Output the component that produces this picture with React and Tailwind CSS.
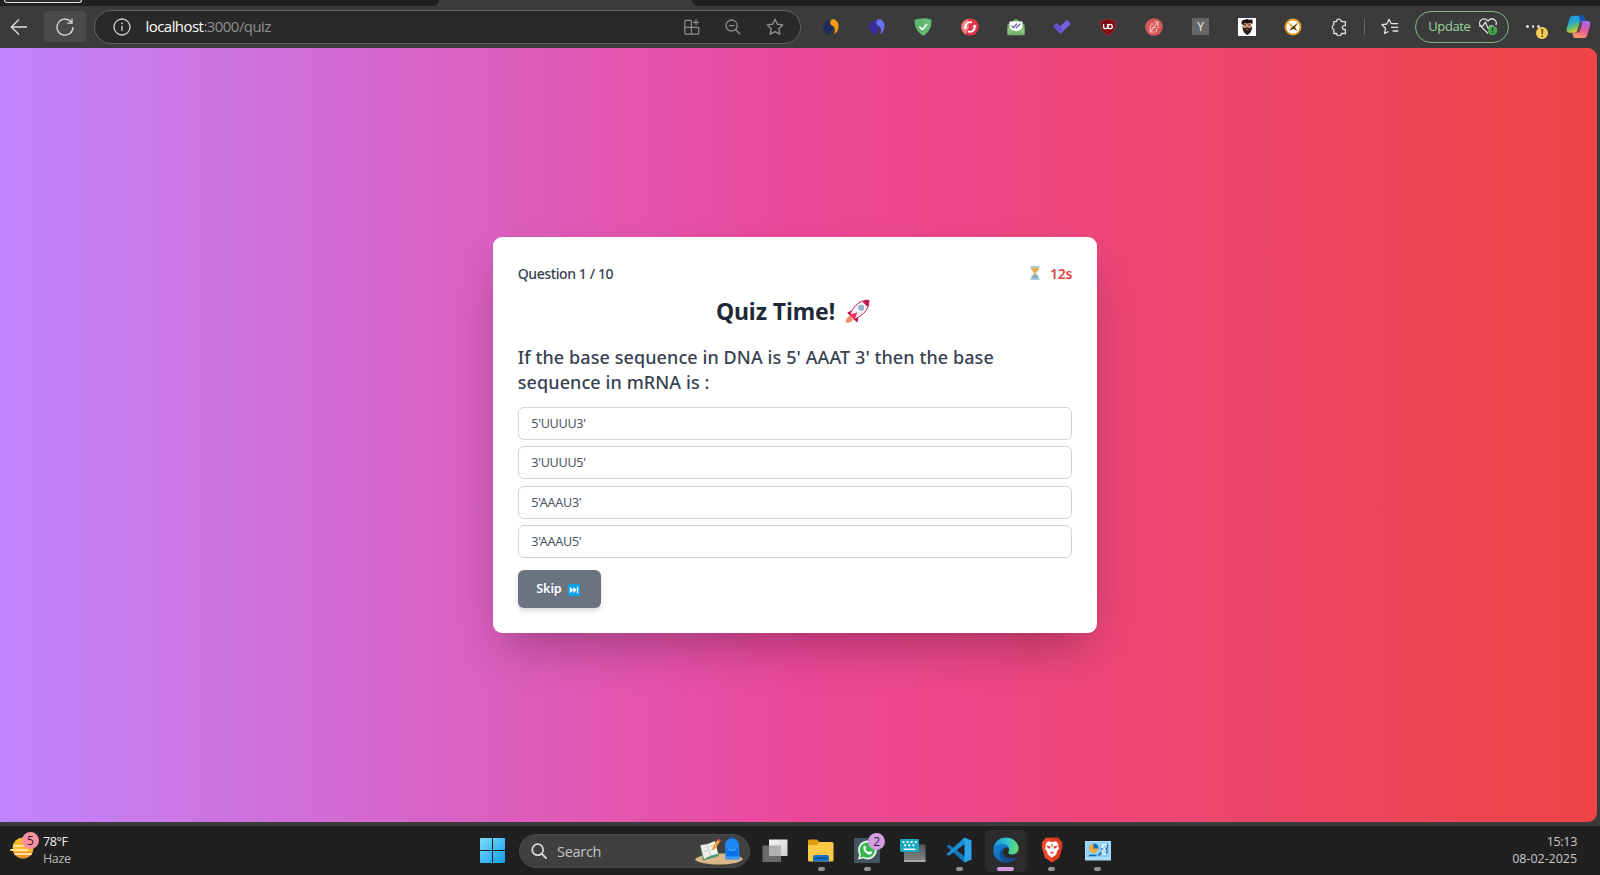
import React from 'react';

const OPTIONS = ["5'UUUU3'", "3'UUUU5'", "5'AAAU3'", "3'AAAU5'"];

function Svg({ size = 18, box = 24, children, className = '' }) {
  return (
    <svg width={size} height={size} viewBox={`0 0 ${box} ${box}`} fill="none" className={`block shrink-0 ${className}`}>
      {children}
    </svg>
  );
}

/* ---------- browser toolbar icons ---------- */

const BackIcon = () => (
  <Svg size={18} box={18}>
    <path d="M17 9H1.5M9 1.5 1.3 9 9 16.5" stroke="#dedede" strokeWidth="1.3" />
  </Svg>
);

const ReloadIcon = () => (
  <Svg size={18} box={18}>
    <path d="M15.2 4.1A8 8 0 1 0 17 9M16 .8v4.4h-4.6" stroke="#dcdcdc" strokeWidth="1.3" />
  </Svg>
);

const InfoIcon = () => (
  <Svg size={18} box={18}>
    <circle cx="9" cy="9" r="8" stroke="#cfcfcf" strokeWidth="1.3" />
    <path d="M9 7.8v5.2" stroke="#cfcfcf" strokeWidth="1.3" />
    <circle cx="9" cy="5.3" r=".9" fill="#cfcfcf" />
  </Svg>
);

const AppsIcon = () => (
  <Svg size={16} box={16}>
    <path d="M7.4 1.3H2A1.2 1.2 0 0 0 .8 2.5V14A1.2 1.2 0 0 0 2 15.200h11.500A1.200 1.200 0 0 0 14.700 14V8.300H.8M7.400 1.300v13.900M12 .3v6M9 3.300h6" stroke="#8f8f8f" strokeWidth="1.2" />
  </Svg>
);

const ZoomOutIcon = () => (
  <Svg size={16} box={16}>
    <circle cx="6.600" cy="6.600" r="5.600" stroke="#8f8f8f" strokeWidth="1.300" />
    <path d="M10.700 10.700 15.300 15.300M4 6.600h5.200" stroke="#8f8f8f" strokeWidth="1.400" />
  </Svg>
);

const StarIcon = () => (
  <Svg size={18} box={18}>
    <path d="m9 1.200 2.400 5 5.400.7-4 3.800 1 5.500L9 13.600l-4.800 2.600 1-5.500-4-3.800 5.400-.7z" stroke="#959595" strokeWidth="1.300" strokeLinejoin="round" />
  </Svg>
);

const Swirl = ({ left, right }) => (
  <Svg size={18} box={18}>
    <path d="M8.200 2C3.500 2.200 1 6 1.200 9.800 1.500 14 5 17 9.600 16.200 7.500 13.500 12.300 12 11.300 9 10.600 7 7.300 6.500 8.200 2Z" fill={left} />
    <path d="M8.200 4.400C8.300 1.800 10.700.6 13 1.700c3 1.500 4 5.200 3.300 8.500-.5 2.500-2 4.600-4.200 5.800.8-2.600 1.500-5-.2-7.300C10.600 7.300 8 7 8.200 4.400Z" fill={right} />
  </Svg>
);

const ShieldCheck = () => (
  <Svg size={18} box={18}>
    <path d="M9 .4c3 0 5.800.5 8.200 1.300.5 7-2.200 12.600-8.200 16C3 14.300.3 8.700.8 1.700 3.200.9 6 .4 9 .4Z" fill="#5fb470" />
    <path d="M9 .4c3 0 5.800.5 8.200 1.300.5 7-2.200 12.600-8.200 16Z" fill="#68bc74" />
    <path d="m5.300 8.500 3 3L13 6" stroke="#fff" strokeWidth="1.600" />
  </Svg>
);

const RedSync = () => (
  <Svg size={18} box={18}>
    <circle cx="9" cy="9" r="8.700" fill="#e2334a" />
    <path d="M2.500 3.300A8.700 8.700 0 0 0 4.500 16.400L8 9 7 1Z" fill="#f2817c" />
    <path d="M4.300 9.800A4.800 4.800 0 0 1 11 4.600M13.700 8.200A4.800 4.800 0 0 1 7 13.400" stroke="#fff" strokeWidth="1.900" />
    <path d="M2.300 9h4.200l-2 2.800zM15.700 9h-4.200l2-2.800z" fill="#fff" />
  </Svg>
);

const MailCheck = () => (
  <Svg size={18} box={18}>
    <path d="M.5 6.500 9 .8l8.500 5.700V16a1.300 1.300 0 0 1-1.300 1.300H1.800A1.300 1.300 0 0 1 .5 16Z" fill="#6fb36c" />
    <path d="M2.600 3.500h12.800v5.300C15 11.500 12 13.200 9 13.200S3 11.500 2.600 8.800Z" fill="#fff" />
    <path d="m.5 9 6 4-6 3.500zM17.500 9l-6 4 6 3.500z" fill="#8cc684" />
    <path d="m4.400 7.700 2 2L10 5.700M8.700 9.200l.7.500L13.300 5.700" stroke="#5453a8" strokeWidth="1.200" />
  </Svg>
);

const PurpleCheck = () => (
  <Svg size={18} box={18}>
    <path d="m.6 8.700 3-3 3.600 3.100L14 2.500l3.400 3.300L7.600 15.600Z" fill="#7460e0" stroke="#7460e0" strokeLinejoin="round" />
    <path d="m.6 8.700 3-3 6.200 5.900-2.200 4Z" fill="#6350cc" />
  </Svg>
);

const UblockIcon = () => (
  <Svg size={18} box={18}>
    <path d="M9 .6c2.500 1.600 5 2.200 7.700 2.300C17 10 14.500 15 9 17.500 3.500 15 1 10 1.300 2.900 4 2.800 6.500 2.200 9 .6Z" fill="#7d0b12" stroke="#a13b3d" strokeWidth=".7" />
    <path d="M4.600 6v2.700a2 2 0 0 0 4 0V6" stroke="#fff" strokeWidth="1.300" />
    <circle cx="11.100" cy="8.500" r="2.200" stroke="#fff" strokeWidth="1.300" />
  </Svg>
);

const RedDoc = () => (
  <Svg size={18} box={18}>
    <circle cx="9" cy="9" r="8.800" fill="#d65757" />
    <path d="M5.300 7.500v6.500h4M9 4h4v6.500" stroke="#f4c4c4" strokeWidth="1.100" />
    <path d="M5.800 13.500 12.500 4.500M7 5v2.500M7.700 9.500h2.800M11.300 11v2.800" stroke="#f8dcdc" strokeWidth="1" />
  </Svg>
);

const FaceIcon = () => (
  <Svg size={18} box={18}>
    <path d="M0 0h18v18H0z" fill="#fff" />
    <path d="M5.200 5h8v7l-4 3-4-3z" fill="#c89a76" />
    <path d="M3.300 4.800 4.800 2l2-.3L9 1l2 .8 3-.2.7 1.700-.6 3.200-1.300-1.700-3.300.7-3.200-.5-.5 2.300-1.600-.8Z" fill="#161414" />
    <path d="M4.500 8 6 10.300l3.200-.7 3.200.7L14 8c.2 3-.8 7.300-4.700 9C5.500 15.300 4.300 11.300 4.500 8Z" fill="#2b1c16" />
    <path d="M6 7h2.200M10.300 7h2.200" stroke="#3a2015" strokeWidth=".9" />
    <path d="M7.700 11.600h3" stroke="#a4755a" strokeWidth=".8" />
  </Svg>
);

const OrangeBird = () => (
  <Svg size={18} box={18}>
    <circle cx="9" cy="9" r="7.500" fill="#fff" stroke="#e99f25" strokeWidth="1.900" />
    <path d="m3.500 4.300 4.200 2.200 1.600 1.700L14 4.700l-2.300 4.800 1.500 3.400-3.500-2.300-4.500 2 2.100-3.800Z" fill="#e9a02b" />
    <path d="m14.600 4-4.300 5.200 3 4-3.600-2.400-4.300 2 4.500-4.800Z" fill="#252525" />
  </Svg>
);

const PuzzleIcon = () => (
  <Svg size={18} box={18}>
    <path d="M3.800 3.600h2.700a2.400 2.400 0 0 1 4.800 0h4.100v4.100h-1.100a1.900 1.900 0 0 0 0 3.800h1.100v4h-4.100a2.300 2.300 0 0 1-4.700 0H3.800v-4a2.400 2.400 0 0 1 0-4.500Z" stroke="#dcdcdc" strokeWidth="1.300" strokeLinejoin="round" />
  </Svg>
);

const FavouritesIcon = () => (
  <Svg size={18} box={18}>
    <path d="M10.300 5.800 8 1.300 5.800 6 .9 6.700l3.600 3.500-.9 5.300L7.500 13.500M10.300 5.700h7M10 9.400h7.300M11.600 13h5.700" stroke="#e2e2e2" strokeWidth="1.300" strokeLinejoin="round" />
  </Svg>
);

const HeartPulse = () => (
  <Svg size={20} box={20}>
    <path d="M10 16.500 3 9.400A4.300 4.300 0 0 1 9 3l1 1 1-1a4.300 4.300 0 0 1 6.800 5" stroke="#dedede" strokeWidth="1.300" />
    <path d="M1 8.800h4L7.300 5l3.200 7 1.700-3.200h3" stroke="#dedede" strokeWidth="1.300" strokeLinejoin="round" />
    <circle cx="14.600" cy="13.600" r="4.700" fill="#49a34c" />
    <path d="M14.600 10.800v3.400M14.600 15.300v1.200" stroke="#183b1a" strokeWidth="1.200" />
  </Svg>
);

const CopilotIcon = () => (
  <svg width="25" height="24" viewBox="0 0 25 24" className="block shrink-0">
    <defs>
      <linearGradient id="cpA" x1="0" y1="0" x2=".4" y2="1">
        <stop stopColor="#168ff0" /><stop offset=".45" stopColor="#28a8c8" /><stop offset=".75" stopColor="#70c35a" /><stop offset="1" stopColor="#f0c62e" />
      </linearGradient>
      <linearGradient id="cpB" x1=".6" y1="0" x2=".3" y2="1">
        <stop stopColor="#a767ee" /><stop offset=".5" stopColor="#e65b9c" /><stop offset="1" stopColor="#ff9a62" />
      </linearGradient>
    </defs>
    <path d="M7.500.8h8.200c2 0 2.500 1.400 3 3.200l.6 2h-2.800c-2 0-2.700 1-3.200 2.800l-2 6.500c-.5 1.800-1.400 2.400-3 2.400H3.500C.8 17.700.1 15.500.8 13L3.700 3.500C4.200 1.800 5.300.8 7.500.8Z" fill="url(#cpA)" />
    <path d="M13 .8h2.700c2 0 2.500 1.400 3 3.200l.6 2h-2.800c-1.300 0-2 .5-2.600 1.400Z" fill="#1950b8" />
    <path d="M16.800 6h4.700c2.700 0 3.300 2.200 2.600 4.600l-2.900 9.600c-.5 1.800-1.600 2.900-3.700 2.900H10c-2 0-2.600-1.500-3.100-3.200l-.6-2.200H9c1.500 0 2.500-.7 3-2.400l2-6.500c.5-1.800 1.300-2.800 2.800-2.800Z" fill="url(#cpB)" />
    <path d="M14.300 7.500h2.500l-3.600 10H9.500c1.300-.2 2.100-1 2.500-2.200Z" fill="#3b3b3b" opacity=".75" />
  </svg>
);

/* ---------- card pictograms ---------- */

const Hourglass = () => (
  <svg width="10" height="14" viewBox="0 0 10 14" className="block">
    <path d="M1 1h8v3L6 7l3 3v3H1v-3l3-3-3-3Z" fill="#b9dcec" />
    <path d="M1.300 1.600h7.400v2L5.800 6.600v2L8 12.500H2L4.200 8.600v-2L1.300 3.600Z" fill="#e8ad43" />
    <path d="M1.800 10.700 5 8.500l3.200 2.200v1.500H1.800Z" fill="#7db0c8" />
    <path d="M.3 0h9.400v1.600H.3zM.3 12.400h9.400V14H.3z" fill="#a6c8d8" />
  </svg>
);

const Rocket = () => (
  <Svg size={25} box={25}>
    <path d="M1 23.800c-.3-3.300 1-6 4-6.500l3 3c-.7 2.600-3.500 3.600-7 3.500Z" fill="#f98a63" />
    <path d="m6.300 11.700-4.100 1.800 3.400 4.200 3-1zM13.300 18.700l-.8 4.900-3.700-3.200.2-3z" fill="#b80d49" />
    <path d="M23.800 1.200c.5 5-1.500 9.700-5.200 13.200-2.600 2.400-5.800 4.400-9.300 5.900L4.900 16c1-3.500 3.300-7 6-9.600C14.300 3 18.800.8 23.800 1.200Z" fill="#f1eff4" stroke="#cb2456" strokeWidth="1" />
    <path d="M17.300 2.400c2-.9 4.300-1.300 6.500-1.200.2 2.300-.2 4.500-1.200 6.500Z" fill="#bc1746" />
    <circle cx="16.200" cy="8.700" r="3" fill="#8eb7cd" />
    <path d="m4.900 16 2.700-1.300 3-.2.100 3-1.400 2.800Z" fill="#fb2a50" />
    <path d="m5 16 7.600-2.800-3.200 7Z" fill="#f92f58" />
  </Svg>
);

const FastForward = () => (
  <Svg size={12} box={12}>
    <rect width="12" height="12" rx="1.500" fill="#0ba2e8" />
    <path d="M1.800 2.800 5.300 6 1.800 9.200zM5.300 2.800 8.800 6 5.300 9.200zM8.900 2.800h1.400v6.400H8.900z" fill="#fff" />
  </Svg>
);

/* ---------- taskbar icons ---------- */

const WindowsLogo = () => (
  <Svg size={25} box={25}>
    <defs>
      <linearGradient id="win" x1="0" y1="0" x2="1" y2="1"><stop stopColor="#7ddcfb" /><stop offset="1" stopColor="#109cf0" /></linearGradient>
    </defs>
    <path d="M1 0h11v12H0V1a1 1 0 0 1 1-1ZM13 0h11a1 1 0 0 1 1 1v11H13ZM0 13h12v12H1a1 1 0 0 1-1-1ZM13 13h12v11a1 1 0 0 1-1 1H13Z" fill="url(#win)" />
  </Svg>
);

const SearchIcon = () => (
  <Svg size={16} box={16}>
    <circle cx="6.700" cy="6.700" r="5.500" stroke="#dadada" strokeWidth="1.700" />
    <path d="m10.700 10.700 4.400 4.400" stroke="#dadada" strokeWidth="2" strokeLinecap="round" />
  </Svg>
);

const SchoolArt = () => (
  <svg width="48" height="28" viewBox="0 0 48 28" className="block shrink-0">
    <path d="M0 22.500c3-4 14-6 24-6s20 1 24 5.500c-3 4-13 5.500-24 5.500S3 26 0 22.500Z" fill="#d9b78b" />
    <path d="M5 9 20 5l4 14-16 4.500Z" fill="#4e9a6b" />
    <path d="m5.500 8 6.500-.7L20 4l3 12.800-7.500 2L9 22Z" fill="#f1f1ec" />
    <path d="m12 7.300 3.500 11.500M8.500 11l2.300-.5M9.500 14.500l3-.8M15 9.500l3-1M16 13l3-1" stroke="#b7bab8" strokeWidth=".8" />
    <path d="m17.500 10 5-7 2.500 1.700-5 7-3 1.500Z" fill="#f2a13b" />
    <path d="m22.500 3 1-1.300 2.500 1.600-1 1.400Z" fill="#e85252" />
    <path d="M35 2c0-2 4-2 4 0" stroke="#0c50c8" strokeWidth="1.500" fill="none" />
    <path d="M30 9c0-5 2.800-7.500 7-7.500S44 4 44 9l.5 13.500H30.500Z" fill="#1b86f4" />
    <path d="M31.500 11c3 2 8 2 11 0l.5 8H31.500Z" fill="#0c70e4" />
    <path d="M33 12.500c2.500 1 6 1 8 0M31 21h13" stroke="#59b6ff" fill="none" />
  </svg>
);

const TaskView = () => (
  <Svg size={26} box={26}>
    <defs>
      <linearGradient id="tv" x1="0" y1="0" x2="1" y2="1"><stop stopColor="#f4f4f4" /><stop offset="1" stopColor="#cfcfcf" /></linearGradient>
    </defs>
    <path d="M.5 8.500h18.500v16.500H.5z" fill="#6a6a6a" />
    <path d="M7 2.500h18.500v16.500H7z" fill="url(#tv)" />
    <path d="M7 8.500h12V19H7z" fill="#b0b0b0" />
  </Svg>
);

const Explorer = () => (
  <Svg size={26} box={26}>
    <path d="M0 4a1.500 1.500 0 0 1 1.500-1.500H9L11.500 5v4H0Z" fill="#dc9c13" />
    <path d="M0 8h9l2.500-3H24a1.500 1.500 0 0 1 1.500 1.500V23a1.500 1.500 0 0 1-1.500 1.500H1.500A1.500 1.500 0 0 1 0 23Z" fill="#fbcb47" />
    <path d="M5 24.500V20a2 2 0 0 1 2-2h12a2 2 0 0 1 2 2v4.500Z" fill="#1672c4" />
    <path d="M7 20.500h12v1.500H7z" fill="#0b4b91" />
  </Svg>
);

const WhatsApp = () => (
  <Svg size={26} box={26}>
    <path d="M0 1h26v25H0z" fill="#41545f" />
    <path d="m4 22.500 1.300-4.800A9.400 9.400 0 1 1 9 21.300Z" fill="#f2f5f2" />
    <path d="m6 20.500.9-3.300a7.600 7.600 0 1 1 2.600 2.500Z" fill="#35b94f" />
    <path d="M9.500 9.500c.8-1.300 1.800-.9 2.200.1l.6 1.400-.9 1.100c.8 1.600 2 2.600 3.500 3.200l1-1.200 2.100 1c.8.400-.3 2.400-1.900 2.500-3.500.1-7.500-4.200-6.600-8.100Z" fill="#fff" />
  </Svg>
);

const Keyboard = () => (
  <Svg size={26} box={26}>
    <defs>
      <linearGradient id="kb" x1="0" y1="0" x2="0" y2="1"><stop stopColor="#55585a" /><stop offset="1" stopColor="#85888a" /></linearGradient>
    </defs>
    <path d="M4 7.500h21.500V24a1 1 0 0 1-1 1H5a1 1 0 0 1-1-1Z" fill="url(#kb)" />
    <path d="M4 23h21.500v1a1 1 0 0 1-1 1H5a1 1 0 0 1-1-1Z" fill="#a7a7a7" />
    <rect y="2" width="19" height="13" rx="1" fill="#1ba8bf" />
    <path d="M2.500 5h14.500M4.200 8.300h11" stroke="#eaffff" strokeWidth="1.900" strokeDasharray="1.900 2.200" />
    <path d="M3.500 12.300h12" stroke="#fff" strokeWidth="1.500" />
  </Svg>
);

const VsCode = () => (
  <Svg size={26} box={26}>
    <path d="m.7 9.300 2-1.700L19 19.500v6h-.8Z" fill="#1477bd" />
    <path d="m.7 17 2 1.700L19 7V.5h-.8Z" fill="#1a8ed8" />
    <path d="M18.500.5 25.500 3.500v19l-7 3Z" fill="#2ba4ed" />
  </Svg>
);

const EdgeLogo = () => (
  <Svg size={26} box={26}>
    <defs>
      <linearGradient id="edA" x1="0" y1=".4" x2="1" y2=".5"><stop stopColor="#1b9ee0" /><stop offset=".5" stopColor="#2fc2cf" /><stop offset="1" stopColor="#62dd6b" /></linearGradient>
      <linearGradient id="edB" x1="0" y1="0" x2=".8" y2="1"><stop stopColor="#1885d6" /><stop offset="1" stopColor="#0d5aa8" /></linearGradient>
    </defs>
    <path d="M.5 12C1 5 6.500.4 13 .4c7.500 0 12.600 5.500 12.600 10.900 0 4-3.100 6.300-6.600 6.300-2.700 0-4.200-1.200-3.700-2.100 1.300-1.700 1-4.600-1-6C10.500 6.800 2.500 7.500.5 12Z" fill="url(#edA)" />
    <path d="M.4 13C1.300 8 6 6 10.200 6.700c3 .4 5.300 2.300 5.800 4.500-4-2.500-7.500 1.200-6.200 5.300 1.500 4.500 8 6.700 14 3.700-2.500 3.600-6.500 5.500-11.300 5.400C5 25.300-.2 19.300.4 13Z" fill="url(#edB)" />
    <path d="M10.700 10.500c-2.200 1.500-2 4.500-.9 6.800 2 4.200 8 5.800 14 2.900-2.500 3.600-6.500 5.500-11.300 5.400-5.500-1.400-8.500-10.600-1.800-15.100Z" fill="#154b91" />
  </Svg>
);

const BraveLogo = () => (
  <svg width="22" height="26" viewBox="0 0 22 26" className="block">
    <path d="m5 .8h12l2.400 2.700 1.900 2-.5 2 .6 1.700-3.300 11.500L11 25.500 3.900 20.700.6 9.200l.6-1.700-.5-2 1.900-2Z" fill="#f1482b" />
    <path d="M11 .8h6l2.400 2.700 1.900 2-.5 2 .6 1.700-3.300 11.500L11 25.500Z" fill="#dd3a20" />
    <path d="m7 4.200 4 .8 4-.8 2.500 3-.5 2 1.200 2-2.700 4 .2 1.600-1.700 1.700-3 2.300-3-2.300-1.700-1.700.2-1.600-2.700-4 1.200-2-.5-2Z" fill="#fff" />
    <path d="m5.500 8.500 4 1-1 2.500-2-1.500ZM16.500 8.500l-4 1 1 2.500 2-1.500ZM9 15.500l2-1 2 1-2 1.500ZM10.300 7h1.400L11 12Z" fill="#e6432a" />
  </svg>
);

const ControlPanel = () => (
  <Svg size={26} box={26}>
    <path d="M0 4h26v19.500H0z" fill="#a9ddf7" />
    <path d="M1.500 5.500h23v14.500h-23z" fill="#8bd2f4" />
    <circle cx="8.500" cy="11.500" r="4.500" fill="#f1a63b" />
    <path d="M8.500 11.500V6.300a5 5 0 0 1 5 5.200Z" fill="#176fbb" />
    <path d="M4 18.500h7.500M13.500 18.500l4-4" stroke="#1265a4" strokeWidth="1.700" />
    <circle cx="19.500" cy="9.500" r="2.200" stroke="#fff" strokeWidth="1.300" />
    <circle cx="19.500" cy="15" r="2.200" stroke="#e9faff" strokeWidth="1.300" />
    <path d="M22 7.500c.8 2 .5 3.500-1 4.500 1.500 1.500 1.500 3.500.3 5M15.500 12h3" stroke="#1664aa" strokeWidth="1.200" />
  </Svg>
);

const EXTENSIONS = [
  <Swirl left="#202b57" right="#f49c0c" />,
  <Swirl left="#392b9b" right="#696ff2" />,
  <ShieldCheck />,
  <RedSync />,
  <MailCheck />,
  <PurpleCheck />,
  <UblockIcon />,
  <RedDoc />,
  <span className="flex h-[17px] w-[17px] items-center justify-center bg-[#666] text-[12px] leading-none text-[#eee]">Y</span>,
  <FaceIcon />,
  <OrangeBird />,
  <PuzzleIcon />,
];

function Browser() {
  return (
    <header className="h-12 shrink-0 bg-[#3b3b3b]">
      <div className="flex h-1.5 justify-between">
        <div className="w-[439px] overflow-hidden rounded-br-md bg-[#202020] pl-1">
          <div className="h-[2.5px] w-[78px] rounded-b-[4px] border-x border-b border-[#dadada] bg-[#2d2d2d]" />
        </div>
        <div className="w-[908px] rounded-bl-md bg-[#202020]" />
      </div>
      <div className="flex h-[42px] items-center pb-px">
        <div className="flex w-11 justify-center pr-[7px]"><BackIcon /></div>
        <div className="flex h-[31px] w-[42px] items-center justify-center rounded bg-[#4a4a4a]"><ReloadIcon /></div>
        <div className="ml-2 flex h-[34px] w-[707px] items-center rounded-full border border-[#626262] bg-[#292929] pl-[17.500px] pr-4">
          <InfoIcon />
          <p className="ml-[15px] flex-1 whitespace-nowrap text-[15px] tracking-[-0.550px] text-[#8f8f8f]"><span className="text-white">localhost</span>:3000/quiz</p>
          <div className="flex items-center gap-[25px]"><AppsIcon /><ZoomOutIcon /><StarIcon /></div>
        </div>
        <div className="ml-[7px] flex items-center">
          {EXTENSIONS.map((icon, i) => <div key={i} className="flex w-[46.2px] justify-center">{icon}</div>)}
        </div>
        <div className="ml-[2px] h-4 w-px bg-[#686868]" />
        <div className="flex w-[50px] justify-center"><FavouritesIcon /></div>
        <div className="flex h-8 w-[94px] shrink-0 items-center justify-between rounded-full border border-[#86b78a] pl-3 pr-[10px] text-[13px] text-[#9bd69d]">
          <span className="tracking-[-0.4px]">Update</span><HeartPulse />
        </div>
        <div className="relative ml-[17px] flex h-6 w-[23px] items-center gap-[3px]">
          <i className="h-[2.500px] w-[2.500px] rounded-full bg-[#ddd]" /><i className="h-[2.500px] w-[2.500px] rounded-full bg-[#ddd]" /><i className="h-[2.500px] w-[2.500px] rounded-full bg-[#ddd]" />
          <span className="absolute left-[10px] top-[12px] flex h-[12px] w-[12px] items-center justify-center rounded-full bg-[#f7cd55] text-[10px] font-bold leading-none text-[#4d3b0c]">!</span>
        </div>
        <div className="ml-[17px]"><CopilotIcon /></div>
      </div>
    </header>
  );
}

function Quiz() {
  return (
    <main className="flex h-[774px] w-[1597px] shrink-0 justify-center rounded-r-[9px] bg-linear-[90deg,#c084fc,#ec4899,#ef4444] pr-[7px] pt-[188.500px]">
      <section className="h-[396.500px] w-[604.500px] rounded-[9px] bg-white px-[25px] pt-[24px] font-['Noto_Sans',sans-serif] text-[#374151] shadow-[0_22px_45px_-11px_rgba(0,0,0,0.3)]">
        <div className="flex h-[25px] items-center justify-between text-[14px] font-medium">
          <span className="tracking-[-0.4px]">Question 1 / 10</span>
          <span className="flex items-center gap-[10px] font-semibold tracking-[-0.2px] text-[#e04444]"><Hourglass />12s</span>
        </div>
        <h1 className="mt-[8px] flex h-[36px] items-center justify-center gap-[10px] pr-[4px] text-[23px] font-bold tracking-[-0.1px] text-[#1f2937]">Quiz Time!<Rocket /></h1>
        <h2 className="mt-[15px] whitespace-nowrap text-[18px] font-medium leading-[25.200px] tracking-[0.090px]">If the base sequence in DNA is 5' AAAT 3' then the base<br />sequence in mRNA is :</h2>
        <div className="mt-[12px] flex flex-col gap-[6.400px]">
          {OPTIONS.map((o) => (
            <button key={o} className="flex h-[33px] items-center rounded-[6px] border border-[#d1d5db] px-[12.500px] pt-[2px] text-[12.600px] tracking-[-0.3px] text-[#4b5563]">{o}</button>
          ))}
        </div>
        <button className="mt-[12px] flex h-[38px] w-[83px] items-center gap-[6px] rounded-[6px] bg-[#6b7280] pl-[18.500px] pt-px text-[12.600px] font-semibold tracking-[-0.1px] text-white shadow-[0_3px_5px_rgba(0,0,0,0.15)]">Skip <FastForward /></button>
      </section>
    </main>
  );
}

const TASKS = [
  { icon: <TaskView /> },
  { icon: <Explorer />, open: true },
  { icon: <WhatsApp />, open: true, badge: '2' },
  { icon: <Keyboard /> },
  { icon: <VsCode />, open: true },
  { icon: <EdgeLogo />, open: true, active: true },
  { icon: <BraveLogo />, open: true },
  { icon: <ControlPanel />, open: true },
];

function Taskbar() {
  return (
    <footer className="flex h-[49px] shrink-0 bg-[#202020]">
      <div className="flex w-[480px] pl-[10px] pt-[8px] text-[12.500px] leading-[16.500px] text-[#f0f0f0]">
        <div className="relative h-8 w-8">
          <svg width="24" height="24" viewBox="0 0 24 24" className="mt-[2px] block">
            <circle cx="13" cy="12" r="10.500" fill="#f9b72b" />
            <path d="M3 16h19.500A10.500 10.500 0 0 1 4.500 18Z" fill="#ee962b" />
            <path d="M4 10h10M1 14h16M5 18h16" stroke="#ffe29a" strokeWidth="2" strokeLinecap="round" />
          </svg>
          <span className="absolute -top-[2px] left-[12px] flex h-[17px] w-[17px] items-center justify-center rounded-full bg-[#fa91a0] text-[12px] leading-none text-[#331c20]">5</span>
        </div>
        <div className="ml-[1px] tracking-[-0.35px]"><p>78°F</p><p className="text-[#b8b8b8]">Haze</p></div>
      </div>
      <div className="flex w-[25px] items-center"><WindowsLogo /></div>
      <div className="ml-[14px] mt-[8px] flex h-[34px] w-[231px] items-center rounded-full border border-[#4a4a4a] bg-[#404040] pl-[11px] pr-[6px] text-[14.500px] text-[#c4c4c4]">
        <SearchIcon /><span className="ml-[10px] flex-1 pt-px tracking-[-0.3px]">Search</span><SchoolArt />
      </div>
      <div className="ml-[2px] flex">
        {TASKS.map((t, i) => (
          <div key={i} className="flex w-[46.100px] justify-center pt-[4px]">
            <div className={`relative flex h-[42px] w-[42px] flex-col items-center rounded-[5px] pt-[7px] ${t.active ? 'bg-[#2c2c2c]' : ''}`}>
              <div className="h-[26px]">{t.icon}</div>
              {t.open && <i className={`mt-[4px] h-[3.500px] rounded-full ${t.active ? 'w-[17px] bg-[#d49be0]' : 'w-[7px] bg-[#929292]'}`} />}
              {t.badge && <span className="absolute left-[22px] top-[3px] flex h-[17px] w-[17px] items-center justify-center rounded-full bg-[#d69ee2] text-[12px] leading-none text-[#2d2030]">{t.badge}</span>}
            </div>
          </div>
        ))}
      </div>
      <div className="ml-auto pr-[23px] pt-[8px] text-right text-[12.500px] leading-[16.500px] tracking-[-0.05px] text-[#c9c9c9]"><p className="tracking-[-0.3px]">15:13</p><p>08-02-2025</p></div>
    </footer>
  );
}

export default function App() {
  return (
    <div className="flex h-[875px] w-[1600px] flex-col overflow-hidden bg-[#3b3b3b] font-['Open_Sans','Noto_Sans',sans-serif]">
      <Browser />
      <Quiz />
      <div className="h-1 shrink-0" />
      <Taskbar />
    </div>
  );
}
